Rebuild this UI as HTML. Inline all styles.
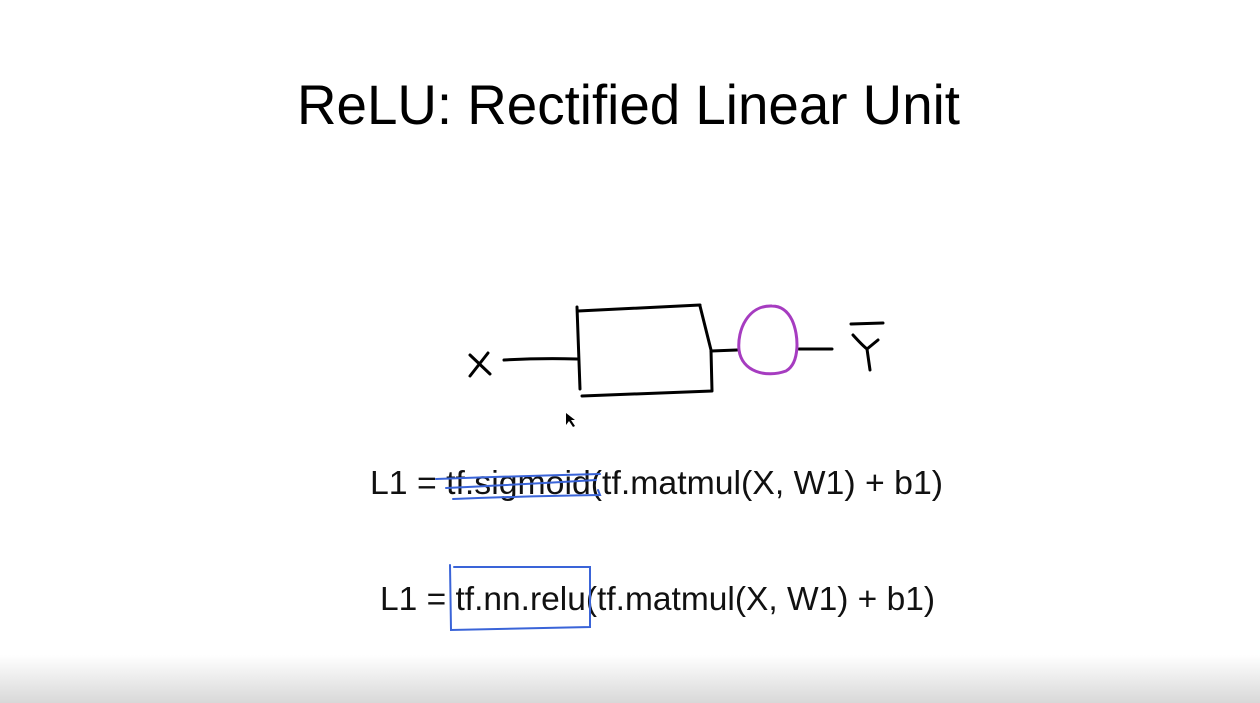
<!DOCTYPE html>
<html><head><meta charset="utf-8"><style>
html,body{margin:0;padding:0;width:1260px;height:703px;overflow:hidden;background:#fff}
svg{display:block}
</style></head><body>
<svg width="1260" height="703" viewBox="0 0 1260 703" xmlns="http://www.w3.org/2000/svg">
<defs><linearGradient id="g" x1="0" y1="0" x2="0" y2="1">
<stop offset="0" stop-color="#fff"/><stop offset="1" stop-color="#d8d8d8"/></linearGradient></defs>
<rect x="0" y="655" width="1260" height="48" fill="url(#g)"/>
<text x="297" y="124" font-family="Liberation Sans, sans-serif" font-size="56" fill="#000" textLength="663" lengthAdjust="spacingAndGlyphs">ReLU: Rectified Linear Unit</text>
<g fill="none" stroke="#000" stroke-width="3" stroke-linecap="round" stroke-linejoin="round">
<path d="M470 355 L490 374 M488 353 L470 376"/>
<path d="M504 360 Q540 358 577 359"/>
<path d="M577 307 L580 389"/>
<path d="M578 311 L700 305"/>
<path d="M700 306 L711 350 L712 391 L582 396"/>
<path d="M711 351 L737 350"/>
<path d="M799 349 L832 349"/>
<path d="M851 324 L883 323"/>
<path d="M853 335 Q862 345 867 349 L870 370 M867 349 L878 340"/>
</g>
<path d="M772 306 C748 305 737 330 739 350 C742 372 766 378 786 371 C800 363 799 335 792 320 C787 310 780 306 772 306 Z" fill="none" stroke="#a63cc0" stroke-width="3"/>
<path d="M566 413 L566 425 L569 421 L573 427 L575 426 L571 420 L575 420 Z" fill="#000"/>
<g font-family="Liberation Sans, sans-serif" font-size="33" fill="#111">
<text x="370" y="494" textLength="573" lengthAdjust="spacingAndGlyphs">L1 = tf.sigmoid(tf.matmul(X, W1) + b1)</text>
<text x="380" y="610" textLength="555" lengthAdjust="spacingAndGlyphs">L1 = tf.nn.relu(tf.matmul(X, W1) + b1)</text>
</g>
<g fill="none" stroke="#3a64d8" stroke-width="2" stroke-linecap="round">
<path d="M436 479 Q520 476 600 474"/>
<path d="M446 488 Q530 484 596 480"/>
<path d="M453 499 Q530 496 600 495 L598 490"/>
<path d="M450 565 L451 630 L590 627 L590 567 L454 567"/>
</g>
</svg>
</body></html>
